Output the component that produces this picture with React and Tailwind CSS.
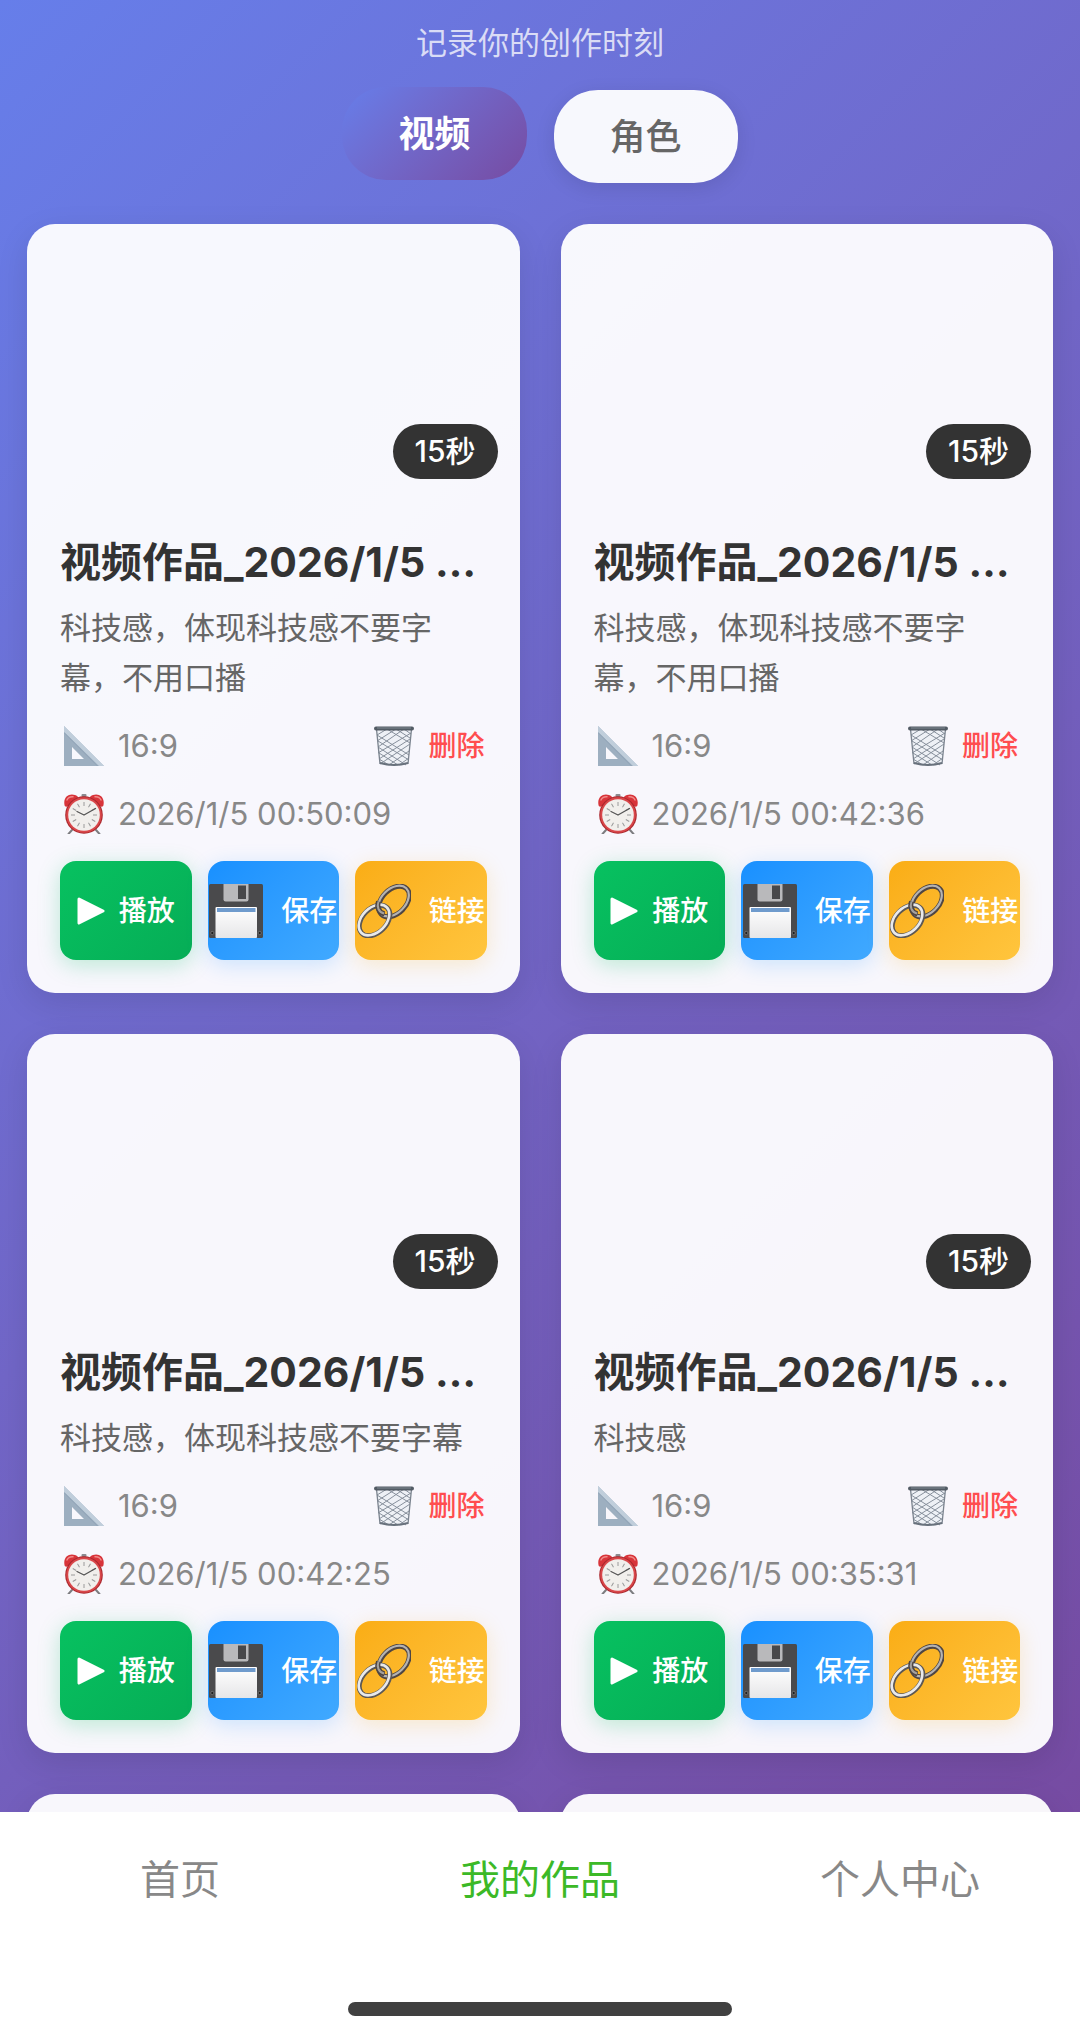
import { useState } from 'react';
import clsx from 'clsx';

const works = [
  { id: 1, title: '视频作品_2026/1/5 00:50:09', desc: '科技感，体现科技感不要字幕，不用口播', time: '2026/1/5 00:50:09' },
  { id: 2, title: '视频作品_2026/1/5 00:42:36', desc: '科技感，体现科技感不要字幕，不用口播', time: '2026/1/5 00:42:36' },
  { id: 3, title: '视频作品_2026/1/5 00:42:25', desc: '科技感，体现科技感不要字幕', time: '2026/1/5 00:42:25' },
  { id: 4, title: '视频作品_2026/1/5 00:35:31', desc: '科技感', time: '2026/1/5 00:35:31' },
  { id: 5, title: '视频作品_2026/1/5 00:31:12', desc: '科技感', time: '2026/1/5 00:31:12' },
  { id: 6, title: '视频作品_2026/1/5 00:28:47', desc: '科技感', time: '2026/1/5 00:28:47' },
];

const tabs = ['视频', '角色'];
const navItems = ['首页', '我的作品', '个人中心'];

function RulerIcon() {
  return (
    <svg viewBox="0 0 40 40" className="size-10 shrink-0" aria-hidden="true">
      <path d="M0 0 40 40H0Z M8 21V33H20Z" fill="#9dafc0" fillRule="evenodd" />
      <path d="M0 0 40 40H35L0 6Z" fill="#c0cedb" />
      <path d="M0 6.500 33.500 40" stroke="#8b9fb2" strokeWidth="0.800" fill="none" />
    </svg>
  );
}

function ClockIcon() {
  const ticks = [0, 30, 60, 90, 120, 150, 180, 210, 240, 270, 300, 330];
  return (
    <svg viewBox="0 0 40 40" className="size-10 shrink-0" aria-hidden="true">
      <path d="M8 36 4.500 40M32 36 35.500 40" stroke="#7d7d80" strokeWidth="2" strokeLinecap="round" />
      <rect x="17.500" y="0" width="5" height="3" rx="1" fill="#8b8b90" />
      <path d="M0.500 11C-1 3 5 -1 11 1c2 .6 3 1.500 3.500 3L3 12.500c-1 .6-2.300 0-2.500-1.500Z" fill="#d8343a" />
      <path d="M39.500 11C41 3 35 -1 29 1c-2 .6-3 1.500-3.500 3L37 12.500c1 .6 2.300 0 2.500-1.500Z" fill="#d8343a" />
      <path d="M3 6c1-2.500 3.500-3.500 6-3.300M37 6c-1-2.500-3.500-3.500-6-3.300" stroke="#f08a88" strokeWidth="1.500" fill="none" strokeLinecap="round" />
      <circle cx="20" cy="21" r="18.800" fill="#a9262c" />
      <circle cx="20" cy="21" r="17.800" fill="#d9474a" />
      <circle cx="20" cy="21" r="15.800" fill="#f1efec" />
      {ticks.map((a) => (
        <path key={a} d="M20 8V12" stroke="#9a9a9a" strokeWidth="1" transform={`rotate(${a} 20 21)`} />
      ))}
      <path d="M20 21 13 17.500M20 21 31.500 14.500" stroke="#555" strokeWidth="1.300" strokeLinecap="round" />
    </svg>
  );
}

function TrashIcon() {
  return (
    <svg viewBox="0 0 40 40" className="size-10 shrink-0" aria-hidden="true">
      <path d="M2 3H38L34 38Q20 41 6 38Z" fill="#eef1f6" />
      <path
        d="M3 9 13 3 36 17M3 15 22 3 36 12M4 21 30 3 37 8M4 27 37 7M5 33 36 13M6 38 36 18M15 39 35 25M25 39 35 32M3 9 35 29M4 15 35 34M4 21 32 39M5 27 24 39M5 33 15 39"
        stroke="#87909c"
        strokeWidth="1"
        fill="none"
      />
      <path d="M2.500 3 6 38M37.500 3 34 38" stroke="#7a838e" strokeWidth="1.300" />
      <path d="M6 37Q20 41 34 37" stroke="#68717c" strokeWidth="2" fill="none" />
      <rect x="0" y="0.500" width="40" height="4" rx="2" fill="#525b64" />
      <path d="M3 2H37" stroke="#8d979f" strokeWidth="0.800" />
    </svg>
  );
}

function PlayIcon() {
  return (
    <svg viewBox="0 0 28 28" className="size-7 shrink-0" aria-hidden="true">
      <path d="M2 2 26 14 2 26Z" fill="#fff" stroke="#fff" strokeWidth="3" strokeLinejoin="round" />
    </svg>
  );
}

function FloppyIcon() {
  return (
    <svg viewBox="0 0 54 54" className="size-[54px] shrink-0" aria-hidden="true">
      <defs>
        <linearGradient id="label" x1="0" y1="0" x2="0" y2="1">
          <stop offset="0" stopColor="#fff" />
          <stop offset="1" stopColor="#e6e6e8" />
        </linearGradient>
      </defs>
      <rect width="54" height="54" rx="1.500" fill="#4a4a4c" />
      <path d="M14.500 0H39.500V15.500Q39.500 17.500 37.500 17.500H16.500Q14.500 17.500 14.500 15.500Z" fill="#b9b9bb" />
      <rect x="29" y="1.500" width="8" height="13.500" fill="#48484a" />
      <rect x="6.500" y="23" width="41.500" height="31" rx="1" fill="url(#label)" />
      <path d="M8 24H46.500V28H8Z" fill="#6f9bcd" />
      <circle cx="3.300" cy="49" r="1.600" fill="#1f1f20" stroke="#8a8a8a" strokeWidth="0.600" />
      <circle cx="50.700" cy="49" r="1.600" fill="#1f1f20" stroke="#8a8a8a" strokeWidth="0.600" />
    </svg>
  );
}

function LinkIcon() {
  return (
    <svg viewBox="0 0 54 54" className="size-[54px] shrink-0" aria-hidden="true">
      <g fill="none">
        <ellipse cx="37" cy="17.500" rx="18" ry="12" transform="rotate(-45 37 17.500)" stroke="#4f4643" strokeWidth="5" />
        <ellipse cx="36.500" cy="17" rx="18" ry="12" transform="rotate(-45 36.500 17)" stroke="#b5b3b1" strokeWidth="2.200" />
        <ellipse cx="17.500" cy="36.500" rx="18" ry="12" transform="rotate(-45 17.500 36.500)" stroke="#5c5855" strokeWidth="5" />
        <ellipse cx="17" cy="36" rx="18" ry="12" transform="rotate(-45 17 36)" stroke="#e9e9ea" strokeWidth="2.600" />
        <path d="M21.500 17.500C19.500 23 21.500 28.500 27.500 30" stroke="#4f4643" strokeWidth="5" />
        <path d="M21.500 17.500C19.500 23 21.500 28 27 29.500" stroke="#a3a09e" strokeWidth="2" />
      </g>
    </svg>
  );
}

function ActionButton({ icon, label, className }) {
  return (
    <button
      type="button"
      className={clsx('flex h-[99px] min-w-0 flex-1 items-center justify-center overflow-hidden rounded-2xl text-[28px] font-medium whitespace-nowrap text-white', className)}
    >
      {icon}
      {label}
    </button>
  );
}

function WorkCard({ work }) {
  return (
    <article className="overflow-hidden rounded-[28px] bg-white/95 shadow-[0_10px_32px_rgba(0,0,0,0.1)]">
      <div className="relative aspect-video">
        <span className="absolute right-[22px] bottom-[22px] rounded-full bg-[#333333] px-[22px] text-[30px] leading-[55px] font-medium text-white">15秒</span>
      </div>
      <div className="p-[33px]">
        <h2 className="truncate text-[41px] leading-[56px] font-bold text-[#333333]">{work.title}</h2>
        <p className="mt-[13px] text-[31px] leading-[50px] text-[#666666]">{work.desc}</p>
        <div className="mt-[23px] flex items-center justify-between pr-0.5 pl-1 text-[31px] leading-10 text-[#888888]">
          <span className="flex items-center gap-3.5"><RulerIcon />16:9</span>
          <button type="button" className="flex items-center gap-3.5 text-[28px] font-medium text-[#ff4d4f]">
            <TrashIcon />
            删除
          </button>
        </div>
        <div className="mt-7 flex items-center gap-3.5 pl-1 text-[31px] leading-10 text-[#888888]">
          <ClockIcon />
          <time>{work.time}</time>
        </div>
        <div className="mt-[27px] flex gap-4">
          <ActionButton icon={<PlayIcon />} label="播放" className="gap-3.5 bg-linear-135 from-[#07c160] to-[#06ad56] shadow-[0_5px_22px_rgba(7,193,96,0.25)]" />
          <ActionButton icon={<FloppyIcon />} label="保存" className="gap-[18px] bg-linear-135 from-[#1890ff] to-[#40a9ff] shadow-[0_5px_22px_rgba(24,144,255,0.2)]" />
          <ActionButton icon={<LinkIcon />} label="链接" className="gap-[18px] bg-linear-135 from-[#faad14] to-[#ffc53d] shadow-[0_5px_22px_rgba(250,173,20,0.2)]" />
        </div>
      </div>
    </article>
  );
}

export default function App() {
  const [tab, setTab] = useState('视频');

  return (
    <div lang="zh-CN" className="flex h-screen flex-col bg-white font-['Inter','Noto_Sans_CJK_SC',sans-serif]">
      <main className="min-h-0 flex-1 overflow-y-auto bg-linear-135 from-[#667eea] to-[#764ba2] px-[27px] pt-5 [scrollbar-width:none]">
        <p className="text-center text-[31px] leading-[46px] text-white/75">记录你的创作时刻</p>
        <div className="mt-6 flex justify-center gap-[27px]">
          {tabs.map((name) => (
            <button
              key={name}
              type="button"
              onClick={() => setTab(name)}
              className={clsx(
                'h-[93px] rounded-[44px] px-[56px] text-[36px]',
                tab === name
                  ? '-translate-y-[3px] bg-linear-135 from-[#667eea] to-[#764ba2] font-bold text-white'
                  : 'bg-white/95 font-medium text-[#666666] shadow-[0_5px_20px_rgba(0,0,0,0.1)]'
              )}
            >
              {name}
            </button>
          ))}
        </div>
        <div className="mt-[41px] grid grid-cols-2 items-start gap-[41px] pb-[41px]">
          {works.map((work) => <WorkCard key={work.id} work={work} />)}
        </div>
      </main>
      <nav className="bg-white pb-[22px]">
        <div className="grid grid-cols-3 pt-10 text-center text-[40px] leading-[56px] text-[#888888]">
          {navItems.map((item) => (
            <a key={item} href="#" className={clsx(item === '我的作品' && 'text-[#3cb927]')}>{item}</a>
          ))}
        </div>
        <div className="mx-auto mt-[94px] h-[14px] w-[384px] rounded-full bg-[#404040]" />
      </nav>
    </div>
  );
}
